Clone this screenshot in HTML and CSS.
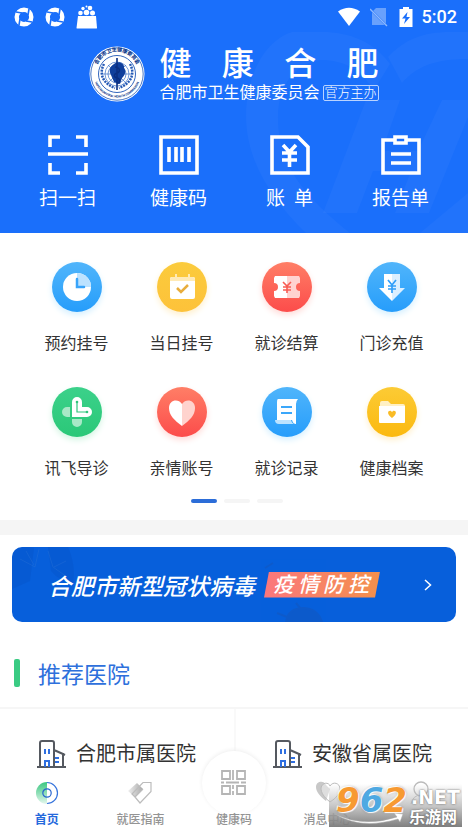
FILE: index.html
```html
<!DOCTYPE html>
<html lang="zh-CN">
<head>
<meta charset="utf-8">
<meta name="viewport" content="width=device-width, initial-scale=1">
<title>健康合肥</title>
<link rel="stylesheet" href="styles.css">
</head>
<body>
<div class="app">
  <header class="hero">
    <svg class="hero-art" viewBox="0 0 468 233" preserveAspectRatio="xMaxYMin slice" aria-hidden="true">
      <g fill="#fff" fill-opacity=".03">
        <path d="M322 32h-30c-26 8-46 42-46 84 0 48 30 88 60 117h44c-42-34-72-65-72-115 0-32 16-54 42-58 26 0 40 10 54 30l16-26c-16-22-40-32-68-32zM468 32h-18c-28 0-46 8-62 25l14 26c14-16 32-24 66-24z"/>
        <path d="M366 100h34l-18 51h36l24-51h-1 34l-46 113h-34l16-42h-38l-16 42h-34zM420 233l48-40v40z"/>
      </g>
    </svg>
    <div class="status">
      <div class="status-side">
        <svg width="20" height="20" viewBox="0 0 20 20" aria-hidden="true"><circle cx="10" cy="10" r="7.300" fill="none" stroke="#fff" stroke-width="4.400"/><path d="M2 5l6 1M15 2l-1 6M18 15l-6-1M5 18l1-6" fill="none" stroke="#1a6ffb" stroke-width="1.600"/></svg>
        <svg width="20" height="20" viewBox="0 0 20 20" aria-hidden="true"><circle cx="10" cy="10" r="7.300" fill="none" stroke="#fff" stroke-width="4.400"/><path d="M2 5l6 1M15 2l-1 6M18 15l-6-1M5 18l1-6" fill="none" stroke="#1a6ffb" stroke-width="1.600"/></svg>
        <svg width="22" height="24" viewBox="0 0 22 24" aria-hidden="true"><path d="M2 11h18l1 12q0 .5-1 .5H1.500q-1 0-1-.5z" fill="#fff"/><g fill="#fff"><circle cx="4.500" cy="8" r="2.300"/><circle cx="10.500" cy="7.500" r="2.800"/><circle cx="16.500" cy="8" r="2.500"/><circle cx="7" cy="3.500" r="1.700"/><circle cx="14" cy="3" r="2.300"/><circle cx="10.500" cy="1.500" r="1"/></g></svg>
      </div>
      <div class="status-side status-right">
        <svg width="24" height="20" viewBox="0 0 24 20" aria-hidden="true"><path d="M1 4.500Q12-3 23 4.500L12 19z" fill="#fff"/></svg>
        <svg width="18" height="20" viewBox="0 0 18 20" aria-hidden="true"><path d="M6 1h10v17H2V5z" fill="#fff" opacity=".35"/><path d="M1 3l16 16" stroke="#1a6ffb" stroke-width="2"/><path d="M0 2l17 17" stroke="#8db8fd" stroke-width="1.500"/></svg>
        <svg width="14" height="20" viewBox="0 0 14 20" aria-hidden="true"><path d="M4 0h6v2h3.500v18H.5V2H4z" fill="#fff"/><path d="M8.500 5L3 11.500h3.500L5 17l6-7H7.500z" fill="#1a6ffb"/></svg>
        <time>5:02</time>
      </div>
    </div>
    <div class="brand">
      <svg class="emblem" viewBox="0 0 56 56" role="img" aria-label="合肥市卫生健康委员会">
        <defs><path id="arc-top" d="M7.500 31A21 21 0 1 1 48.500 31"/><path id="arc-bottom" d="M4.500 28A23.500 23.500 0 0 0 51.500 28"/></defs>
        <circle cx="28" cy="28" r="27.500" fill="#fff"/>
        <circle cx="28" cy="28" r="26.200" fill="none" stroke="#1d56b5" stroke-width=".8"/>
        <circle cx="28" cy="28" r="18.500" fill="none" stroke="#1d56b5" stroke-width=".9"/>
        <text class="emblem-cn"><textPath href="#arc-top" startOffset="50%" text-anchor="middle">合肥市卫生健康委员会</textPath></text>
        <text class="emblem-en"><textPath href="#arc-bottom" startOffset="50%" text-anchor="middle">HEFEI MUNICIPAL HEALTH COMMISSION</textPath></text>
        <g fill="none" stroke="#3a6fc4" stroke-width=".7"><circle cx="28" cy="28" r="12"/><circle cx="28" cy="28" r="9"/><path d="M14 28h28M28 12v32M19 19l18 18M37 19L19 37"/></g>
        <path d="M15 18c-5 9-2 19 11 24M41 18c5 9 2 19-11 24" fill="none" stroke="#2459b5" stroke-width="2.500" stroke-dasharray="2 1"/>
        <path d="M25 18c4-4 11-1 10 4 3 4 0 8-2 10l-2 6-6-2-3-7c-2-4-2-8 3-11z" fill="#103f9c"/>
        <path d="M28 12v32M26 21c6 1 5 5 2 6s-4 4 0 5 3 5 0 6" fill="none" stroke="#0a2e80" stroke-width="1.500"/>
      </svg>
      <div class="brand-text">
        <h1><span>健</span><span>康</span><span>合</span><span>肥</span></h1>
        <p class="owner">合肥市卫生健康委员会<span class="host">官方主办</span></p>
      </div>
    </div>
    <nav class="actions" aria-label="快捷操作">
      <a href="#"><svg viewBox="0 0 40 40" aria-hidden="true"><path d="M2 12V2h10M28 2h10v10M2 28v10h10M28 38h10V28M0 19h40"/></svg>扫一扫</a>
      <a href="#"><svg viewBox="0 0 40 40" aria-hidden="true"><path d="M2 2h36v36H2zM10 12v15M17 12v15M23 12v15M30 12v15"/></svg>健康码</a>
      <a href="#"><svg viewBox="0 0 40 40" aria-hidden="true"><path d="M2 2h26l10 10v26H2zM13 10l6.500 7L26 10M12 18h15M12 25h15M19.500 17v15"/></svg><span class="spaced"><span>账</span> <span>单</span></span></a>
      <a href="#"><svg viewBox="0 0 40 40" aria-hidden="true"><path d="M14 5H2v33h36V5H26M14 2h11v6H14zM10 19h20M10 28h20"/></svg>报告单</a>
    </nav>
  </header>

  <main>
    <section class="services">
      <div class="service-grid">
        <a href="#"><span class="disc blue"><svg viewBox="0 0 50 50" aria-hidden="true"><circle cx="25" cy="25" r="14" fill="#fff"/><path d="M25 11a14 14 0 0 1 14 14H25z" fill="#bce2ff"/><path d="M25 17v8h7" fill="none" stroke="#38a4fa" stroke-width="2.500" stroke-linecap="round"/></svg></span>预约挂号</a>
        <a href="#"><span class="disc yellow"><svg viewBox="0 0 50 50" aria-hidden="true"><rect x="13" y="15" width="25" height="22" rx="2" fill="#fff"/><path d="M13 19v-2q0-2 2-2h21q2 0 2 2v2z" fill="#ffeab6"/><path d="M19 12v5M32 12v5" stroke="#ffeab6" stroke-width="2"/><path d="M20 26l4 4 7-7" fill="none" stroke="#e8ad3c" stroke-width="2.500"/></svg></span>当日挂号</a>
        <a href="#"><span class="disc red"><svg viewBox="0 0 50 50" aria-hidden="true"><path d="M13 14h12v22H13l-1-2v-5a4 4 0 0 0 0-8v-5z" fill="#fff"/><path d="M25 14h12l1 2v5a4 4 0 0 0 0 8v5l-1 2H25z" fill="#ffd3d0"/><path d="M21 20l4 4 4-4M21 25h8M21 28h8M25 24v7" fill="none" stroke="#f85c53" stroke-width="1.600"/></svg></span>就诊结算</a>
        <a href="#"><span class="disc blue"><svg viewBox="0 0 50 50" aria-hidden="true"><path d="M17 12h8v27L12 26h5z" fill="#fff"/><path d="M25 12h8v14h5L25 39z" fill="#dbefff"/><path d="M21 18l4 5 4-5M21 24h8M21 27h8M25 23v8" fill="none" stroke="#319ff9" stroke-width="1.700"/></svg></span>门诊充值</a>
        <a href="#"><span class="disc green"><svg viewBox="0 0 50 50" aria-hidden="true"><path d="M18 20v10h-3a5 5 0 0 1 0-10zM20 32h10v3a5 5 0 0 1-10 0z" fill="#a8e8c7"/><path d="M20 30V15a5 5 0 0 1 10 0v5h5a5 5 0 0 1 0 10z" fill="#fff"/><path d="M25 15v10h10" fill="none" stroke="#2fc57c" stroke-width="1.200"/><circle cx="25" cy="15" r="1.300" fill="#2fc57c"/><circle cx="35" cy="25" r="1.300" fill="#2fc57c"/></svg></span>讯飞导诊</a>
        <a href="#"><span class="disc red"><svg viewBox="0 0 50 50" aria-hidden="true"><path d="M25 39C17 33 12 28 12 21c0-8 9-10 13-4z" fill="#fff"/><path d="M25 39c8-6 13-11 13-18 0-8-9-10-13-4z" fill="#ffd3ce"/></svg></span>亲情账号</a>
        <a href="#"><span class="disc blue"><svg viewBox="0 0 50 50" aria-hidden="true"><path d="M16 12h20q-2 2-2 5v20q-3 0-4-4H15V15q0-3 1-3z" fill="#fff"/><path d="M13 33h16q1 4 4 4H17q-4 0-4-4z" fill="#bce3ff"/><path d="M19 20h11M19 26h11" stroke="#3ba7fa" stroke-width="2"/></svg></span>就诊记录</a>
        <a href="#"><span class="disc yellow deep"><svg viewBox="0 0 50 50" aria-hidden="true"><path d="M13 21v-5q0-2 2-2h6l3 3h12q2 0 2 2v3z" fill="#fff0c4"/><path d="M12 19h26v16q0 1-1 1H13q-1 0-1-1z" fill="#fff"/><path d="M25 31c-6-4-4-8-1-7l1 1 1-1c3-1 5 3-1 7z" fill="#f9bb25"/></svg></span>健康档案</a>
      </div>
      <div class="pager" aria-hidden="true"><i class="on"></i><i></i><i></i></div>
    </section>

    <section class="promo">
      <a class="banner" href="#">
        <svg class="banner-art" viewBox="0 0 444 75" preserveAspectRatio="none" aria-hidden="true"><path d="M0 4Q12-2 22 1L18 34 0 42zM36 0h20q8 18 5 36-14-2-22-12z" fill="#084ec1" opacity=".3"/><path d="M8 12l15 8 4-18M14 4l8 14M36 4l5 16 14 10M42 20l12-6" fill="none" stroke="#347ad7" opacity=".3"/><path d="M274 75q2-14 18-14 14 1 18 14zM265 66l10 4M284 56l5 6M253 21l8-5" fill="#1653b5" stroke="#1754b4" stroke-width="2" opacity=".4"/></svg>
        <span class="banner-title">合肥市新型冠状病毒</span>
        <span class="banner-tag">疫情防控</span>
        <svg class="chevron" viewBox="0 0 8 12" aria-hidden="true"><path d="M1 1l5.500 5L1 11"/></svg>
      </a>
    </section>

    <h2 class="section-title">推荐医院</h2>
    <div class="hospitals">
      <a href="#"><svg viewBox="0 0 29 28" aria-hidden="true"><path class="wall" d="M0 27h29M3 27V3q0-2 2-2h10q2 0 2 2v24M17 10l9 4v13M26 14l2 1"/><path class="lit" d="M8 9v5M12 9v5M8 27v-6h4v6M18 18h4M18 22h4"/></svg>合肥市属医院</a>
      <a href="#"><svg viewBox="0 0 29 28" aria-hidden="true"><path class="wall" d="M0 27h29M3 27V3q0-2 2-2h10q2 0 2 2v24M17 10l9 4v13M26 14l2 1"/><path class="lit" d="M8 9v5M12 9v5M8 27v-6h4v6M18 18h4M18 22h4"/></svg>安徽省属医院</a>
    </div>
  </main>

  <nav class="tabs" aria-label="主导航">
    <a href="#" class="current"><svg viewBox="0 0 24 24" aria-hidden="true"><defs><linearGradient id="gr" x2="0" y2="1"><stop stop-color="#39c680"/><stop offset="1" stop-color="#e4f7ed"/></linearGradient></defs><path d="M12 1a11 11 0 0 0 0 22z" fill="url(#gr)"/><path d="M12 1.500a10.500 10.500 0 0 1 0 21" fill="none" stroke="#3674dc" stroke-width="1.200"/><circle cx="12" cy="12" r="4.200" fill="none" stroke="#2765cf" stroke-width="1.200"/></svg>首页</a>
    <a href="#"><svg viewBox="0 0 24 24" aria-hidden="true"><defs><linearGradient id="gg"><stop stop-color="#eee"/><stop offset="1" stop-color="#aaa"/></linearGradient></defs><path d="M0 10L9 2l6 6-8 8z" fill="url(#gg)"/><path d="M7 16l-3-3L15 1.500h8v9L12 22zM15 8L7 16" fill="none" stroke="#bcbcbc" stroke-width="1.200"/></svg>就医指南</a>
    <a href="#" class="center-tab"><span class="bubble"><svg viewBox="0 0 26 26" aria-hidden="true"><path d="M1 1h8v8H1zM16 1h8v8h-8zM1 16h8v8H1zM12 0v10M0 12.500h3M5 12.500h13M20 12.500h5M12 15v4M12 21v4M16 16h8v8h-8z" fill="none" stroke="#b5b5b5" stroke-width="1.800"/></svg></span>健康码</a>
    <a href="#"><svg viewBox="0 0 24 24" aria-hidden="true"><path d="M10 20C4 15 0 11 0 6c0-6 8-7 10-2l4 4z" fill="#c8c8c8"/><path d="M14 21C8 16 5 12 5 7c1-6 8-6 9-2 3-5 10-3 10 3 0 5-4 9-10 13z" fill="#fff" fill-opacity=".4" stroke="#bbb"/></svg>消息中心</a>
    <a href="#"><svg viewBox="0 0 24 24" aria-hidden="true"><circle cx="12" cy="8" r="7" fill="#fff" stroke="#bbb" stroke-width="1.300"/><path d="M2 23q2-9 10-9t10 9" fill="none" stroke="#bbb"/></svg>我的</a>
  </nav>

  <div class="watermark">
    <span class="mark-num"><b>9</b><b class="sky">6</b><b>2</b></span>
    <span class="mark-words"><span class="mark-net">.NET</span><span class="mark-cn">乐游网</span></span>
    <svg class="swoosh" viewBox="0 0 70 14" aria-hidden="true"><path d="M1 1q28 14 62 3l-3-4 9 1-3 8-2-3Q27 17 1 1z" fill="#fff" stroke="#aaa" stroke-width=".5"/></svg>
  </div>
</div>
</body>
</html>
```
FILE: styles.css
```css
* { box-sizing: border-box; }
body {
  margin: 0;
  background: #fff;
  color: #333;
  font-family: Roboto, "Noto Sans CJK SC", sans-serif;
}
h1, h2, p { margin: 0; }
a { color: inherit; text-decoration: none; }
svg { display: block; flex: none; }

.app {
  position: relative;
  display: flex;
  flex-direction: column;
  min-height: 100vh;
  overflow: hidden;
}

/* Header */
.hero {
  position: relative;
  background: #1a6ffb;
  color: #fff;
  padding-bottom: 20px;
}
.hero-art { position: absolute; inset: 0; width: 100%; height: 100%; }
.status {
  position: relative;
  display: flex;
  justify-content: space-between;
  align-items: center;
  height: 34px;
  padding: 0 11px 0 14px;
}
.status-side { display: flex; align-items: center; gap: 11px; }
.status-right { gap: 9px; }
.status-right svg:nth-child(2) { margin-right: 2px; }
.status time { font-size: 18px; font-weight: 500; line-height: 20px; }

.brand {
  position: relative;
  display: flex;
  justify-content: center;
  gap: 14px;
  padding-top: 12px;
}
.emblem { width: 56px; height: 56px; }
.emblem-cn { font-size: 5px; font-weight: 900; fill: #123c8c; }
.emblem-en { font-size: 3px; font-weight: 900; fill: #123c8c; }
.brand-text { display: flex; flex-direction: column; }
h1 {
  display: flex;
  justify-content: space-between;
  font-size: 32px;
  font-weight: 500;
  line-height: 36px;
}
.owner {
  display: flex;
  align-items: center;
  gap: 3px;
  font-size: 16px;
  font-weight: 400;
  line-height: 22px;
}
.host {
  padding: 0 1px;
  border: 1px solid #b9d3ff;
  border-radius: 2px;
  font-size: 13px;
  font-weight: 300;
  line-height: 14px;
}

.actions {
  position: relative;
  display: grid;
  grid-template-columns: repeat(4, 1fr);
  padding: 31px 12px 0;
}
.actions a {
  display: flex;
  flex-direction: column;
  align-items: center;
  gap: 10px;
  font-size: 19px;
  line-height: 28px;
}
.actions svg { width: 40px; height: 40px; fill: none; stroke: #fff; stroke-width: 3.6; }
.spaced { display: flex; gap: 9px; }

/* Services */
.services { padding: 29px 24px 17px; border-bottom: 15px solid #f5f5f5; }
.service-grid { display: grid; grid-template-columns: repeat(4, 1fr); row-gap: 31px; }
.service-grid a {
  display: flex;
  flex-direction: column;
  align-items: center;
  gap: 20px;
  font-size: 16px;
  line-height: 24px;
}
.disc { width: 50px; height: 50px; border-radius: 50%; }
.blue { background: linear-gradient(#50b5fb, #269dfb); box-shadow: 0 3px 6px #d5f0ff; }
.yellow { background: linear-gradient(#fbcb3c, #fdc23a); box-shadow: 0 3px 6px #fff0cd; }
.deep { background: linear-gradient(#fccb35, #fbb90f); }
.red { background: linear-gradient(#ff7e66, #fc4c4b); box-shadow: 0 3px 6px #ffdcd9; }
.green { background: linear-gradient(#3bd18a, #2bc878); box-shadow: 0 3px 6px #d4f5e3; }
.pager { display: flex; justify-content: center; gap: 7px; margin: 18px 0 0 6px; }
.pager i { width: 26px; height: 4px; border-radius: 2px; background: #f5f5f5; }
.pager .on { background: #2c6dd8; }

/* Banner */
.promo { padding: 12px 12px 16px; }
.banner {
  position: relative;
  display: flex;
  align-items: center;
  height: 75px;
  padding: 0 24px 0 36px;
  border-radius: 10px;
  overflow: hidden;
  background: #075fdb;
  color: #fff;
}
.banner-art { position: absolute; inset: 0; width: 100%; height: 100%; }
.banner-title {
  position: relative;
  font-size: 23px;
  font-style: italic;
  font-weight: 500;
  white-space: nowrap;
}
.banner-tag {
  position: relative;
  margin-left: 9px;
  padding: 0 7px 0 9px;
  background: linear-gradient(90deg, #fb777d, #f3904b);
  clip-path: polygon(5px 0, 100% 0, calc(100% - 5px) 100%, 0 100%);
  font-size: 21px;
  font-style: italic;
  font-weight: 500;
  line-height: 26px;
  letter-spacing: 4px;
  white-space: nowrap;
}
.chevron {
  position: relative;
  width: 8px;
  height: 12px;
  margin-left: auto;
  fill: none;
  stroke: #fff;
  stroke-width: 1.5;
}

/* Hospitals */
.section-title {
  display: flex;
  align-items: center;
  gap: 18px;
  height: 71px;
  padding-left: 14px;
  border-bottom: 2px solid #f6f6f6;
  color: #2e70dc;
  font-size: 23px;
  font-weight: 400;
}
.section-title::before {
  content: "";
  width: 6px;
  height: 28px;
  border-radius: 2px;
  background: #3acb83;
}
.hospitals { display: grid; grid-template-columns: 1fr 1fr; }
.hospitals a {
  display: flex;
  align-items: center;
  gap: 10px;
  padding: 30px 0 6px 37px;
  font-size: 20px;
  line-height: 30px;
}
.hospitals a + a { border-left: 2px solid #f9f9f9; }
.hospitals svg { width: 29px; height: 28px; fill: none; stroke-width: 2; }
.wall { stroke: #555960; }
.lit { stroke: #2f6fe0; }

/* Bottom tabs */
.tabs {
  display: grid;
  grid-template-columns: repeat(5, 1fr);
  margin-top: auto;
  background: #fff;
  color: #949494;
  font-size: 12px;
  font-weight: 500;
  line-height: 16px;
}
.tabs a {
  position: relative;
  display: flex;
  flex-direction: column;
  align-items: center;
  justify-content: flex-end;
  gap: 7px;
  height: 58px;
  padding-bottom: 5px;
}
.tabs svg { width: 24px; height: 24px; }
.tabs .current { color: #2569dc; font-weight: 700; }
.bubble {
  position: absolute;
  z-index: -1;
  top: -24px;
  left: 50%;
  display: grid;
  place-items: center;
  width: 64px;
  height: 64px;
  margin-left: -32px;
  border-radius: 50%;
  background: #fff;
  box-shadow: 0 -1px 4px #eee;
}
.center-tab { z-index: 1; }
.tabs .bubble svg { width: 26px; height: 26px; }

/* Site mark over the corner */
.watermark {
  position: absolute;
  z-index: 2;
  right: 6px;
  bottom: 6px;
  display: flex;
  justify-content: space-between;
  width: 133px;
  height: 43px;
  padding: 0 2px 0 7px;
  background: linear-gradient(#fff0, #bbbc 50%, #777e);
  color: #fff;
  font-family: "DejaVu Sans", "Noto Sans CJK SC", sans-serif;
}
.mark-num {
  color: #f79a32;
  font-size: 34px;
  font-style: italic;
  line-height: 32px;
  text-shadow: 1px 1px 1px #fff, -1px -1px 1px #fff, 0 0 3px #888;
}
.sky { color: #4fa9e2; }
.mark-words { display: flex; flex-direction: column; align-items: flex-end; font-weight: 700; text-shadow: 0 0 2px #555; }
.mark-net { font-size: 19px; line-height: 27px; }
.mark-cn { padding-right: 3px; font-size: 16px; line-height: 14px; }
.swoosh { position: absolute; left: 5px; bottom: 0; width: 70px; height: 14px; }
```
